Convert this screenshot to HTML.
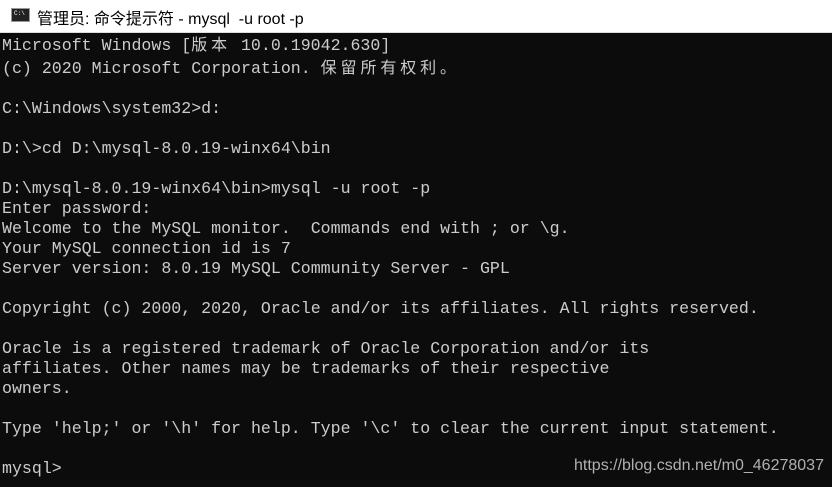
<!DOCTYPE html>
<html><head><meta charset="utf-8"><style>
html,body{margin:0;padding:0;width:832px;height:487px;overflow:hidden;background:#0c0c0c}
.tb{position:absolute;left:0;top:0;width:832px;height:32px;background:#fff;border-bottom:1px solid #ddd}
.ic{position:absolute;left:11px;top:8px;width:19px;height:14px;background:#222;border:1px solid #999;box-sizing:border-box}
.ic span{position:absolute;left:2px;top:2px;font:6px "Liberation Mono",monospace;color:#fff;line-height:6px}
.tt{position:absolute;left:37px;top:5px;font:16px "Liberation Sans","Noto Sans CJK SC",sans-serif;color:#000}
pre{position:absolute;left:2px;top:33px;margin:0;font:16.6px/20px "Liberation Mono",monospace;color:#cccccc}
.c{display:inline-block;width:19.9px;font-family:"Noto Sans CJK SC",sans-serif;font-size:16px}
.wm{position:absolute;left:574px;top:457px;font:16px "Liberation Sans",sans-serif;color:#b0b0b0}
</style></head><body>
<div class="tb"><div class="ic"><span>C:\</span></div><div class="tt">管理员: 命令提示符 - mysql &nbsp;-u root -p</div></div>
<pre>Microsoft Windows [<span class="c">版</span><span class="c">本</span> 10.0.19042.630]
(c) 2020 Microsoft Corporation. <span class="c">保</span><span class="c">留</span><span class="c">所</span><span class="c">有</span><span class="c">权</span><span class="c">利</span><span class="c">。</span>

C:\Windows\system32&gt;d:

D:\&gt;cd D:\mysql-8.0.19-winx64\bin

D:\mysql-8.0.19-winx64\bin&gt;mysql -u root -p
Enter password:
Welcome to the MySQL monitor.  Commands end with ; or \g.
Your MySQL connection id is 7
Server version: 8.0.19 MySQL Community Server - GPL

Copyright (c) 2000, 2020, Oracle and/or its affiliates. All rights reserved.

Oracle is a registered trademark of Oracle Corporation and/or its
affiliates. Other names may be trademarks of their respective
owners.

Type 'help;' or '\h' for help. Type '\c' to clear the current input statement.

mysql&gt;</pre>
<div class="wm">https://blog.csdn.net/m0_46278037</div>
</body></html>
